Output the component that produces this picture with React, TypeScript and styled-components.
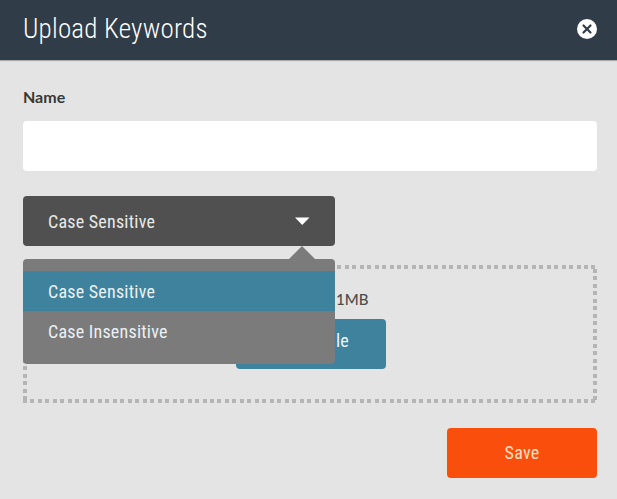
import React from "react";
import styled, { createGlobalStyle } from "styled-components";

const GlobalStyle = createGlobalStyle`
  * { box-sizing: border-box; }
  body { margin: 0; background: #e4e4e4; }
  button, input { font: inherit; border: 0; padding: 0; }
`;

const Dialog = styled.main`
  width: 617px;
  height: 499px;
  background: #e4e4e4;
  font-family: "Lato", sans-serif;
  overflow: hidden;
`;

const Header = styled.header`
  height: 60px;
  padding: 0 20px 2px 23px;
  display: flex;
  align-items: center;
  justify-content: space-between;
  background: #303c48;
  color: #fff;
  box-shadow: 0 1px 1px rgba(0, 0, 0, 0.25);
`;

const Condensed = styled.span<{ $size?: number; $weight?: number; $spacing?: number }>`
  font-family: "Roboto Condensed", "Roboto", sans-serif;
  font-stretch: 75%;
  font-size: ${(p) => p.$size ?? 18}px;
  font-weight: ${(p) => p.$weight ?? 400};
  letter-spacing: ${(p) => p.$spacing ?? 0.23}px;
  white-space: nowrap;
`;

const CloseButton = styled.button`
  display: flex;
  background: none;
`;

const Body = styled.form`
  padding: 27px 20px 0 23px;
  display: flex;
  flex-direction: column;
`;

const Label = styled.label`
  height: 20px;
  line-height: 20px;
  font-size: 16px;
  font-weight: 700;
  color: #383838;
`;

const TextInput = styled.input`
  height: 50px;
  margin-top: 14px;
  border-radius: 4px;
  background: #fff;
  outline: none;
`;

const Select = styled.div`
  position: relative;
  width: 312px;
  margin-top: 25px;
`;

const SelectButton = styled.button`
  width: 100%;
  height: 50px;
  padding: 0 25px;
  display: flex;
  align-items: center;
  justify-content: space-between;
  border-radius: 4px;
  background: #505050;
  color: #e9e9e9;
`;

const Menu = styled.div`
  position: absolute;
  z-index: 1;
  top: 63px;
  left: 0;
  width: 100%;
  height: 105px;
  padding-top: 12px;
  border-radius: 4px;
  background: #7b7b7b;

  &::before {
    content: "";
    position: absolute;
    top: -13px;
    right: 20px;
    border: solid transparent;
    border-width: 0 13px 13px;
    border-bottom-color: #7b7b7b;
  }
`;

const Option = styled.div<{ $active?: boolean }>`
  height: 40px;
  padding-left: 25px;
  display: flex;
  align-items: center;
  background: ${(p) => (p.$active ? "#3f829d" : "transparent")};
  color: #ebf1f3;
`;

const dotsX = "repeating-linear-gradient(90deg, #b5b5b5 0 4px, transparent 4px 7.48px)";
const dotsY = "repeating-linear-gradient(180deg, #b5b5b5 0 4px, transparent 4px 7.48px)";

const DropZone = styled.section`
  height: 138px;
  margin-top: 19px;
  padding-top: 24px;
  display: flex;
  flex-direction: column;
  align-items: center;
  background:
    ${dotsX} 0 0 / 100% 4px no-repeat,
    ${dotsX} 0 100% / 100% 4px no-repeat,
    ${dotsY} 0 4px / 4px 100% no-repeat,
    ${dotsY} 100% 4px / 4px 100% no-repeat;
`;

const Hint = styled.p`
  margin: 0;
  width: 117px;
  height: 20px;
  line-height: 20px;
  font-size: 15px;
  font-weight: 500;
  color: #4c4c4c;
  white-space: nowrap;
  display: flex;
  justify-content: flex-end;
`;

const ActionButton = styled.button<{ $primary?: boolean }>`
  width: 150px;
  height: 50px;
  display: flex;
  align-items: center;
  justify-content: center;
  border-radius: 4px;
  background: ${(p) => (p.$primary ? "#fa4e0c" : "#3f829d")};
  color: ${(p) => (p.$primary ? "#ffe0c4" : "#eef5f8")};
`;

const SelectFile = styled(ActionButton)`
  margin: 10px 0 0 2px;
  padding-bottom: 7px;
  flex-shrink: 0;
`;

const SaveButton = styled(ActionButton)`
  padding-bottom: 1px;
`;

const Footer = styled.footer`
  margin-top: 25px;
  display: flex;
  justify-content: flex-end;
`;

export default function App() {
  return (
    <>
      <GlobalStyle />
      <Dialog>
        <Header>
          <Condensed $size={27} $weight={300} $spacing={0.22}>Upload Keywords</Condensed>
          <CloseButton aria-label="Close">
            <svg width="20" height="20" viewBox="0 0 20 20">
              <circle cx="10" cy="10" r="10" fill="#fff" />
              <path d="M6.5 6.5 13.5 13.5M13.5 6.5 6.5 13.5" stroke="#303c48" strokeWidth="2.2" strokeLinecap="round" />
            </svg>
          </CloseButton>
        </Header>
        <Body>
          <Label htmlFor="name">Name</Label>
          <TextInput id="name" />
          <Select>
            <SelectButton type="button">
              <Condensed>Case Sensitive</Condensed>
              <svg width="15" height="8" viewBox="0 0 15 8">
                <path d="M0 0.5H14.5L7.25 8Z" fill="#fff" />
              </svg>
            </SelectButton>
            <Menu>
              <Option $active><Condensed>Case Sensitive</Condensed></Option>
              <Option><Condensed>Case Insensitive</Condensed></Option>
            </Menu>
          </Select>
          <DropZone>
            <Hint>Max size 1MB</Hint>
            <SelectFile type="button"><Condensed>Select File</Condensed></SelectFile>
          </DropZone>
          <Footer>
            <SaveButton type="button" $primary><Condensed>Save</Condensed></SaveButton>
          </Footer>
        </Body>
      </Dialog>
    </>
  );
}
